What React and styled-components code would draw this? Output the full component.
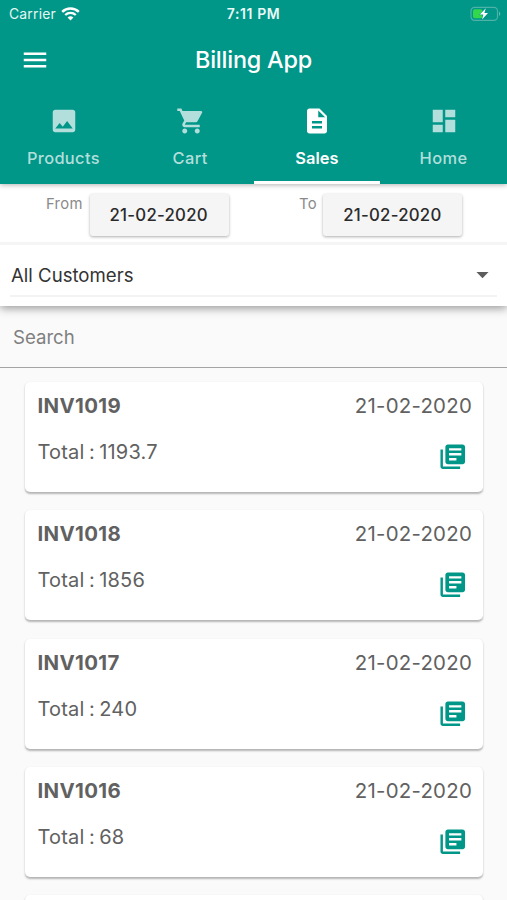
import React from 'react';
import styled, { createGlobalStyle } from 'styled-components';
import {
    MdMenu,
    MdImage,
    MdShoppingCart,
    MdDescription,
    MdDashboard,
    MdLibraryBooks,
    MdArrowDropDown
} from 'react-icons/md';

const GlobalStyle = createGlobalStyle`
    * {
        box-sizing: border-box;
    }
    body {
        margin: 0;
        background: #fafafa;
        font-family: Inter, "Liberation Sans", sans-serif;
        overflow: hidden;
    }
`;

const Screen = styled.div`
    display: flex;
    flex-direction: column;
    height: 900px;
    overflow: hidden;
    background: #fafafa;
`;

const Header = styled.header`
    position: relative;
    z-index: 2;
    flex: none;
    height: 184px;
    background: #009688;
    color: #fff;
    box-shadow: 0 1px 5px rgba(0, 0, 0, .3);
`;

const StatusBar = styled.div`
    display: grid;
    grid-template-columns: 1fr auto 1fr;
    align-items: center;
    height: 27px;
    padding: 0 6px 0 9px;
    font-size: 13.9px;
    line-height: 27px;
    svg {
        display: block;
    }
`;

const Carrier = styled.div`
    display: flex;
    align-items: center;
    gap: 5.5px;
    letter-spacing: .2px;
    color: #e4f6f3;
`;

const Clock = styled.div`
    padding-right: 3px;
    font-size: 14px;
    line-height: 28px;
    font-weight: 600;
    letter-spacing: .6px;
    color: #e9faf7;
`;

const Battery = styled.div`
    justify-self: end;
`;

const AppBar = styled.div`
    display: grid;
    grid-template-columns: 70px 1fr 70px;
    align-items: center;
    height: 66px;
    svg {
        display: block;
        margin-left: 20px;
    }
`;

const Title = styled.h1`
    margin: 0;
    font-size: 23.4px;
    line-height: 30px;
    font-weight: 500;
    letter-spacing: -.2px;
    text-align: center;
`;

const Tabs = styled.nav`
    display: grid;
    grid-template-columns: repeat(4, 1fr);
    height: 91px;
`;

const Tab = styled.div`
    display: flex;
    flex-direction: column;
    align-items: center;
    padding-top: 13px;
    border-bottom: 3px solid ${props => (props.$active ? '#fff' : 'transparent')};
    color: ${props => (props.$active ? '#fff' : '#b2dfdb')};
    font-size: 16.4px;
    line-height: 22px;
    font-weight: ${props => (props.$active ? 600 : 500)};
    letter-spacing: ${props => props.$spacing};
    svg {
        display: block;
        margin: 0 0 11px 1px;
    }
`;

const Filters = styled.section`
    position: relative;
    z-index: 1;
    flex: none;
    height: 122px;
    background: #fff;
    box-shadow: 0 2px 9px rgba(0, 0, 0, .42);
`;

const DateRow = styled.div`
    display: grid;
    grid-template-columns: 253px 1fr;
    height: 61px;
    padding-top: 10px;
    border-bottom: 3px solid #f5f5f5;
`;

const DateField = styled.div`
    display: flex;
    gap: ${props => props.$gap};
    padding-left: 46px;
`;

const DateLabel = styled.span`
    font-size: 14.8px;
    line-height: 20px;
    letter-spacing: .3px;
    color: #8a8a8a;
`;

const DateButton = styled.button`
    width: 139px;
    height: 42px;
    padding: 0 1px 0 0;
    border: 0;
    border-radius: 3px;
    background: #f5f5f5;
    box-shadow: 0 1px 3px rgba(0, 0, 0, .32);
    font-family: inherit;
    font-size: 16.8px;
    font-weight: 500;
    letter-spacing: .25px;
    color: #2b2b2b;
`;

const Picker = styled.div`
    display: flex;
    justify-content: space-between;
    align-items: center;
    height: 52px;
    margin: 0 10px;
    padding: 9px 0 0 1px;
    border-bottom: 2px solid #f3f3f3;
    font-size: 18.6px;
    color: #333;
    svg {
        display: block;
        color: #5c5c5c;
    }
`;

const SearchField = styled.div`
    flex: none;
    display: flex;
    align-items: center;
    height: 62px;
    padding: 0 13px;
    border-bottom: 1px solid #a4a4a4;
    font-size: 18.6px;
    color: #7f7f7f;
`;

const InvoiceList = styled.div`
    display: flex;
    flex-direction: column;
    gap: 18.3px;
    padding: 14px 24px 0 25px;
`;

const Card = styled.article`
    flex: none;
    height: 110px;
    padding: 10px 11px 0 12px;
    border-radius: 5px;
    background: #fff;
    box-shadow: 0 1.5px 2px rgba(0, 0, 0, .28);
    color: #616161;
    font-size: 20.4px;
    line-height: 27px;
    letter-spacing: .25px;
`;

const CardRow = styled.div`
    display: flex;
    justify-content: space-between;
    & + & {
        margin-top: 19px;
    }
    svg {
        display: block;
        margin: 4px 5px 0 0;
        color: #009688;
    }
`;

const Number = styled.span`
    padding-left: .5px;
    font-weight: 700;
    letter-spacing: .35px;
`;

const Total = styled.span`
    padding-left: .5px;
    font-size: 20px;
    line-height: 29px;
    letter-spacing: .2px;
    word-spacing: -1.5px;
`;

const TABS = [
    { label: 'Products', icon: MdImage, spacing: '.35px' },
    { label: 'Cart', icon: MdShoppingCart, spacing: '.45px' },
    { label: 'Sales', icon: MdDescription, spacing: '.05px', active: true },
    { label: 'Home', icon: MdDashboard, spacing: '.45px' }
];

const INVOICES = [
    { id: 'INV1019', total: '1193.7' },
    { id: 'INV1018', total: '1856' },
    { id: 'INV1017', total: '240' },
    { id: 'INV1016', total: '68' }
];

const DATE = '21-02-2020';

function WifiIcon() {
    return (
        <svg width="19" height="14" viewBox="0 0 19 14" fill="none" stroke="#fff">
            <path d="M1.2 4.9a12 12 0 0 1 16.6 0" strokeWidth="2.5" />
            <path d="M4.2 8a7.6 7.6 0 0 1 10.6 0" strokeWidth="2.3" />
            <path d="M9.5 13.6l-2.9-3a4.2 4.2 0 0 1 5.8 0z" fill="#fff" stroke="none" />
        </svg>
    );
}

function BatteryIcon() {
    return (
        <svg width="31" height="16" viewBox="0 0 31 16">
            <rect x="1" y="1.3" width="26.5" height="13" rx="3.6" fill="none" stroke="#4db3a8" strokeWidth="1.2" />
            <path d="M29 5.6c1.8.7 1.8 3.7 0 4.4z" fill="#5fbab0" />
            <rect x="3" y="3.3" width="9.5" height="9" rx="1.8" fill="#32d74b" />
            <path d="M15.8 2.2L9.8 8.6h3.6l-1.4 4.8 6-6.4h-3.6z" fill="#fff" stroke="#009688" strokeWidth="1" paintOrder="stroke" />
        </svg>
    );
}

function App() {
    return (
        <Screen>
            <GlobalStyle />
            <Header>
                <StatusBar>
                    <Carrier>
                        Carrier
                        <WifiIcon />
                    </Carrier>
                    <Clock>7:11 PM</Clock>
                    <Battery>
                        <BatteryIcon />
                    </Battery>
                </StatusBar>
                <AppBar>
                    <MdMenu size={30} />
                    <Title>Billing App</Title>
                </AppBar>
                <Tabs>
                    {TABS.map(({ label, icon: Icon, spacing, active }) => (
                        <Tab key={label} $active={active} $spacing={spacing}>
                            <Icon size={30} />
                            {label}
                        </Tab>
                    ))}
                </Tabs>
            </Header>
            <Filters>
                <DateRow>
                    <DateField $gap="7px">
                        <DateLabel>From</DateLabel>
                        <DateButton>{DATE}</DateButton>
                    </DateField>
                    <DateField $gap="6.5px">
                        <DateLabel>To</DateLabel>
                        <DateButton>{DATE}</DateButton>
                    </DateField>
                </DateRow>
                <Picker>
                    All Customers
                    <MdArrowDropDown size={29} />
                </Picker>
            </Filters>
            <SearchField>Search</SearchField>
            <InvoiceList>
                {INVOICES.map(({ id, total }) => (
                    <Card key={id}>
                        <CardRow>
                            <Number>{id}</Number>
                            <span>{DATE}</span>
                        </CardRow>
                        <CardRow>
                            <Total>Total : {total}</Total>
                            <MdLibraryBooks size={29.5} />
                        </CardRow>
                    </Card>
                ))}
                <Card />
            </InvoiceList>
        </Screen>
    );
}

export default App;
